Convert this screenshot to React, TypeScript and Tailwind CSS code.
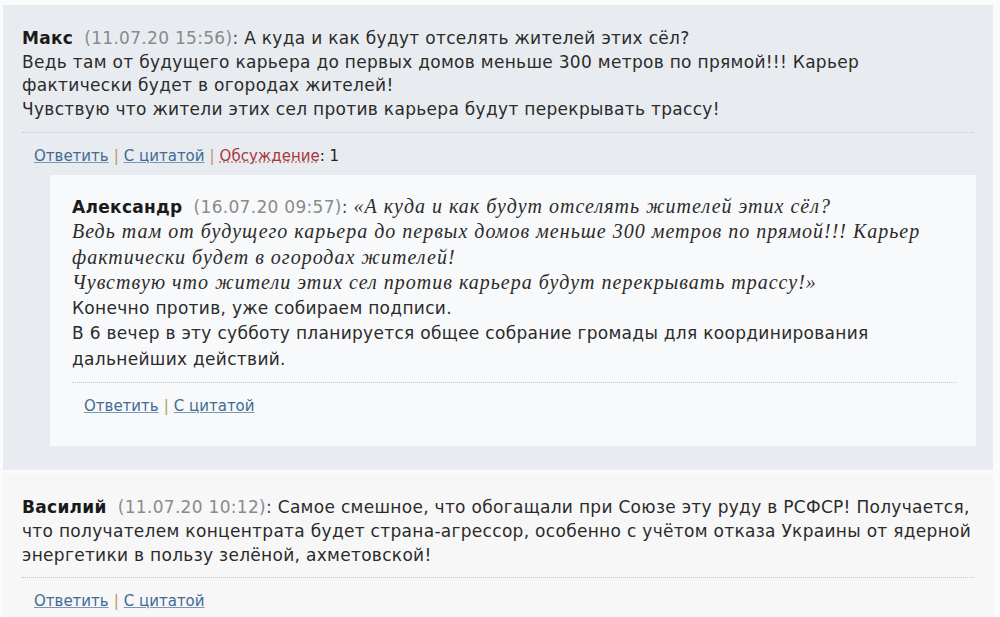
import React from 'react';

const sans = "font-['DejaVu_Sans',Verdana,sans-serif]";

function Links({ discussion }: { discussion?: boolean }) {
  return (
    <div className="pl-[12px] pt-[12px] text-[15px] leading-[22px] tracking-normal text-[#333]">
      <a href="#" className="text-[#3f6b96] underline decoration-[#7a97b5]">Ответить</a>
      <span className="text-[#b59a62] px-[5px]">|</span>
      <a href="#" className="text-[#3f6b96] underline decoration-[#7a97b5]">С цитатой</a>
      {discussion && (
        <>
          <span className="text-[#b59a62] px-[5px]">|</span>
          <a href="#" className="text-[#a8383b] underline decoration-dotted decoration-[#c07b7d]">Обсуждение</a>
          <span className="text-[#222]">: 1</span>
        </>
      )}
    </div>
  );
}

function Head({ name, date }: { name: string; date: string }) {
  return (
    <>
      <b className="text-[#1a1a1a]">{name}</b>
      <span className="text-[#8a8a8a] ml-[11px]">({date})</span>
      <span className="text-[#3a4a60]">: </span>
    </>
  );
}

export default function App() {
  return (
    <div className={`min-h-[617px] bg-[#fbfbfb] pt-[5px] pr-[7px] pl-[3px] ${sans}`}>
      {/* first thread */}
      <div className="bg-[#e8ecf0] px-[19px] pt-[22px] pb-[24px]">
        <div className="text-[17px] leading-[23.5px] tracking-[0.3px] text-[#2b2b2b]">
          <Head name="Макс" date="11.07.20 15:56" />
          А куда и как будут отселять жителей этих сёл?<br />
          Ведь там от будущего карьера до первых домов меньше 300 метров по прямой!!! Карьер фактически будет в огородах жителей!<br />
          Чувствую что жители этих сел против карьера будут перекрывать трассу!
        </div>
        <div className="mt-[11px] border-t border-dotted border-[#c5c8cc]" />
        <Links discussion />

        <div className="mt-[8px] ml-[28px] mr-[-2px] bg-[#f8f9fa] pl-[22px] pr-[20px] pt-[20px] pb-[29px]">
          <div className="text-[17px] leading-[25.3px] tracking-[0.3px] text-[#2b2b2b]">
            <Head name="Александр" date="16.07.20 09:57" />
            <i className="font-['Liberation_Serif',serif] text-[20px] leading-none tracking-[1px]">
              «А куда и как будут отселять жителей этих сёл?<br />
              Ведь там от будущего карьера до первых домов меньше 300 метров по прямой!!! Карьер фактически будет в огородах жителей!<br />
              Чувствую что жители этих сел против карьера будут перекрывать трассу!»
            </i>
            <br />
            Конечно против, уже собираем подписи.<br />
            В 6 вечер в эту субботу планируется общее собрание громады для координирования дальнейших действий.
          </div>
          <div className="mt-[10px] border-t border-dotted border-[#c5c8cc]" />
          <Links />
        </div>
      </div>

      {/* second comment */}
      <div className="mt-[3px] bg-[#f7f7f7] px-[19px] pt-[22px] pb-[10px]">
        <div className="text-[17px] leading-[24px] tracking-[0.3px] text-[#2b2b2b]">
          <Head name="Василий" date="11.07.20 10:12" />
          Самое смешное, что обогащали при Союзе эту руду в РСФСР! Получается, что получателем концентрата будет страна-агрессор, особенно с учётом отказа Украины от ядерной энергетики в пользу зелёной, ахметовской!
        </div>
        <div className="mt-[10px] border-t border-dotted border-[#c5c8cc]" />
        <Links />
      </div>
    </div>
  );
}
